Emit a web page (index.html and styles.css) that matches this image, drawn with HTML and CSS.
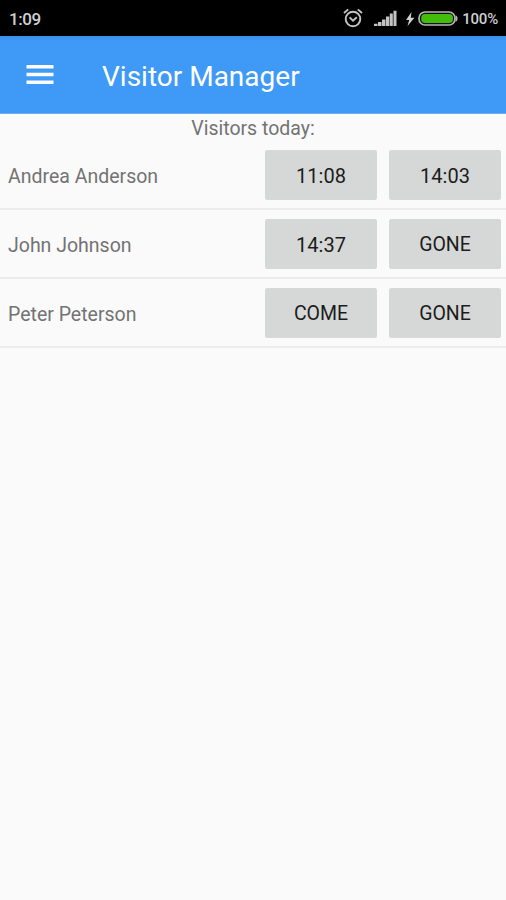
FILE: index.html
```html
<!DOCTYPE html>
<html lang="en">
<head>
    <meta charset="UTF-8">
    <meta name="viewport" content="width=device-width, initial-scale=1.0">
    <title>Visitor Manager</title>
    <link rel="stylesheet" href="styles.css">
</head>
<body>
    <div class="status-bar">
        <span class="clock">1:09</span>
        <div class="status-icons">
            <svg class="alarm" width="20" height="20" viewBox="0 0 20 20" fill="none" stroke="#c4c4c4" stroke-width="1.9">
                <circle cx="10" cy="11" r="7.3"/>
                <path d="M6.6 9.4l3.4 3.2 3.8-3.4M1 5l4.2-3.6M19 5l-4.2-3.6"/>
            </svg>
            <svg class="signal" width="24" height="17" viewBox="0 0 24 17" fill="#c4c4c4">
                <path d="M1 13.8h3.500V16H1zM5 12h3.500v4H5zM9 9.500h3.500V16H9zM13 6.500h3.300V16H13zM16.800 3.500h3V16h-3zM20.500 .8h3V16h-3z"/>
            </svg>
            <svg class="bolt" width="10" height="16" viewBox="0 0 10 16" fill="#d0d0d0">
                <path d="M6.500 1L1 9h3.200L2.500 15 9.500 6.700H5.800z"/>
            </svg>
            <svg class="battery" width="40" height="15" viewBox="0 0 40 15">
                <rect x="1" y="1" width="36" height="13" rx="6" fill="#111" stroke="#b9b3bb" stroke-width="1.700"/>
                <path d="M37.500 4.500q2 0 2 3t-2 3z" fill="#b9b3bb"/>
                <rect x="3.200" y="3" width="31.800" height="9" rx="4" fill="#42bd0b"/>
            </svg>
            <span class="percent">100%</span>
        </div>
    </div>
    <header>
        <button class="menu-button" aria-label="Menu">
            <svg width="28" height="20" viewBox="0 0 28 20" fill="#fff">
                <path d="M.5 0h27v3.400H.5zM.5 7.800h27v3.400H.5zM.5 15.600h27V19H.5z"/>
            </svg>
        </button>
        <h1>Visitor Manager</h1>
    </header>
    <main>
        <p class="caption">Visitors today:</p>
        <ul class="visitors">
            <li><span class="name">Andrea Anderson</span><button>11:08</button><button>14:03</button></li>
            <li><span class="name">John Johnson</span><button>14:37</button><button class="action">GONE</button></li>
            <li><span class="name">Peter Peterson</span><button class="action">COME</button><button class="action">GONE</button></li>
        </ul>
    </main>
</body>
</html>
```
FILE: styles.css
```css
* { box-sizing: border-box; }
body { font-family: Roboto, sans-serif; margin: 0; background-color: #fafafa; color: #737373; min-height: 100vh; }
button { font-family: inherit; border: none; padding: 0; cursor: pointer; }
svg { display: block; }

.status-bar { display: flex; justify-content: space-between; align-items: center; height: 36px; padding: 1px 8px 0 9px; background-color: #000; color: #d0d0d0; }
.clock { font-size: 17px; font-weight: 500; letter-spacing: -0.4px; }
.status-icons { display: flex; align-items: center; }
.alarm { margin-right: 10px; margin-top: -2px; }
.signal { margin-right: 8px; }
.bolt { margin-right: 3px; }
.battery { margin-right: 4px; }
.percent { font-size: 15px; font-weight: 500; letter-spacing: -0.2px; }

header { display: flex; align-items: center; height: 78px; padding-left: 26px; background: linear-gradient(#3a90ea, #3f99f7 5px); border-bottom: 1px solid #6aaef5; }
.menu-button { background: none; }
h1 { margin: 4px 0 0 48px; font-size: 28px; font-weight: 400; line-height: 32px; color: #fff; }

.caption { margin: 0; height: 27px; line-height: 30px; font-size: 19.5px; text-align: center; }
.visitors { list-style: none; margin: 0; padding: 0; }
.visitors li { display: flex; align-items: center; gap: 12px; height: 69px; padding: 0 5px 0 8px; border-bottom: 2px solid #ececec; }
.name { flex: 1; font-size: 19.5px; padding-top: 3px; }
.visitors button { width: 112px; height: 50px; padding-top: 2px; border-radius: 2px; background-color: #d6d8d7; color: #1c1c1c; font-size: 20px; }
.visitors .action { font-size: 19.5px; }
```
